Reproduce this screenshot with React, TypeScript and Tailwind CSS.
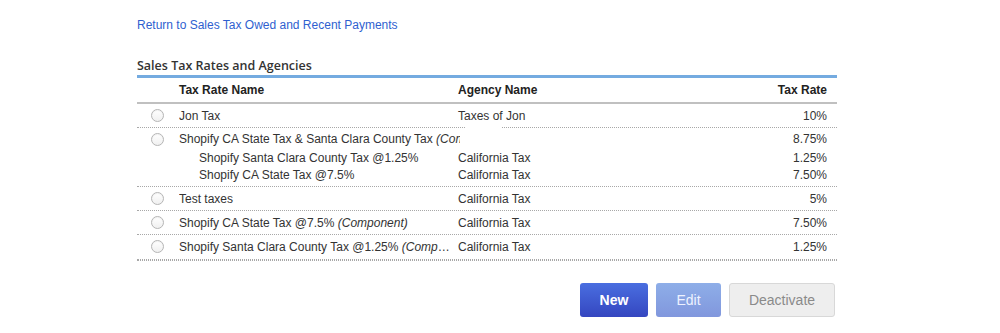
import React from 'react';

type Row = {
  name: string;
  note?: string;
  agency: string;
  rate: string;
  clip?: boolean;
  parts?: { name: string; agency: string; rate: string }[];
};

const rows: Row[] = [
  { name: 'Jon Tax', agency: 'Taxes of Jon', rate: '10%' },
  {
    name: 'Shopify CA State Tax & Santa Clara County Tax',
    note: '(Component)',
    agency: '',
    rate: '8.75%',
    clip: true,
    parts: [
      { name: 'Shopify Santa Clara County Tax @1.25%', agency: 'California Tax', rate: '1.25%' },
      { name: 'Shopify CA State Tax @7.5%', agency: 'California Tax', rate: '7.50%' },
    ],
  },
  { name: 'Test taxes', agency: 'California Tax', rate: '5%' },
  { name: 'Shopify CA State Tax @7.5%', note: '(Component)', agency: 'California Tax', rate: '7.50%' },
  { name: 'Shopify Santa Clara County Tax @1.25%', note: '(Component)', agency: 'California Tax', rate: '1.25%' },
];

function Radio() {
  return (
    <span className="block w-[13px] h-[13px] rounded-full border border-[#b5b5b5] bg-gradient-to-b from-white to-[#f0f0f0] shadow-[inset_0_1px_1px_rgba(0,0,0,0.05)]" />
  );
}

export default function App() {
  return (
    <div className="min-h-screen bg-white font-['Liberation_Sans',Arial,sans-serif] text-[12px] text-[#333]">
      <div className="w-[700px] ml-[137px] pt-[18px]">
        <a href="#" className="block leading-[14px] text-[#2f5fd0]">
          Return to Sales Tax Owed and Recent Payments
        </a>

        <h2 className="mt-[26px] font-['Open_Sans',sans-serif] text-[12.5px] font-semibold leading-[16px] text-[#333]">
          Sales Tax Rates and Agencies
        </h2>

        <div className="mt-[1px] border-t-[3px] border-[#74abe0]">
          {/* header */}
          <div className="grid grid-cols-[42px_279px_1fr_auto] items-center h-[26px] border-b-2 border-[#c0c0c0] font-bold text-[#222]">
            <span />
            <span>Tax Rate Name</span>
            <span>Agency Name</span>
            <span className="pr-[10px] text-right">Tax Rate</span>
          </div>

          {rows.map((r, i) => {
            const last = i === rows.length - 1;
            return (
              <div key={i} className={i === 0 ? '' : 'border-b border-dotted border-[#a8a8a8]'}>
                <div
                  className={
                    'grid grid-cols-[42px_279px_1fr_auto] items-center ' + (r.parts ? 'h-[20px] mt-[1px]' : 'h-[23px]')
                  }
                >
                  <span className="flex justify-center pr-[1px]">
                    <Radio />
                  </span>
                  {r.clip ? (
                    <span className="w-[281px] overflow-hidden whitespace-nowrap">
                      {r.name} <i>{r.note}</i>
                    </span>
                  ) : (
                    <span className="truncate pr-[6px]">
                      {r.name}
                      {r.note && <i> {r.note}</i>}
                    </span>
                  )}
                  <span>{r.agency}</span>
                  <span className="pr-[10px] text-right">{r.rate}</span>
                </div>
                {r.parts && (
                  <div className="pb-[3px]">
                    {r.parts.map((p, j) => (
                      <div key={j} className="grid grid-cols-[42px_279px_1fr_auto] items-center h-[17px]">
                        <span />
                        <span className="pl-[20px] whitespace-nowrap">{p.name}</span>
                        <span>{p.agency}</span>
                        <span className="pr-[10px] text-right">{p.rate}</span>
                      </div>
                    ))}
                  </div>
                )}
                {i === 0 && (
                  <div className="flex">
                    <span className="w-[328px] border-b border-dotted border-[#a8a8a8]" />
                    <span className="w-[37px]" />
                    <span className="flex-1 border-b border-dotted border-[#a8a8a8]" />
                  </div>
                )}
                {last && <div className="h-[2px] border-b border-dotted border-[#a8a8a8]" />}
              </div>
            );
          })}
        </div>

        <div className="mt-[22px] flex justify-end gap-[8px] pr-[2px]">
          <button className="w-[68px] h-[34px] rounded-[3px] bg-gradient-to-b from-[#4a6ee0] to-[#3546c0] text-[14px] font-bold text-white">
            New
          </button>
          <button className="w-[65px] h-[34px] rounded-[3px] bg-gradient-to-b from-[#8eaee8] to-[#8197dd] text-[14px] text-[#eef2ff]">
            Edit
          </button>
          <button className="w-[106px] h-[34px] rounded-[3px] border border-[#d8d8d8] bg-[#eeeeee] text-[14px] text-[#8a8a8a]">
            Deactivate
          </button>
        </div>
      </div>
    </div>
  );
}
